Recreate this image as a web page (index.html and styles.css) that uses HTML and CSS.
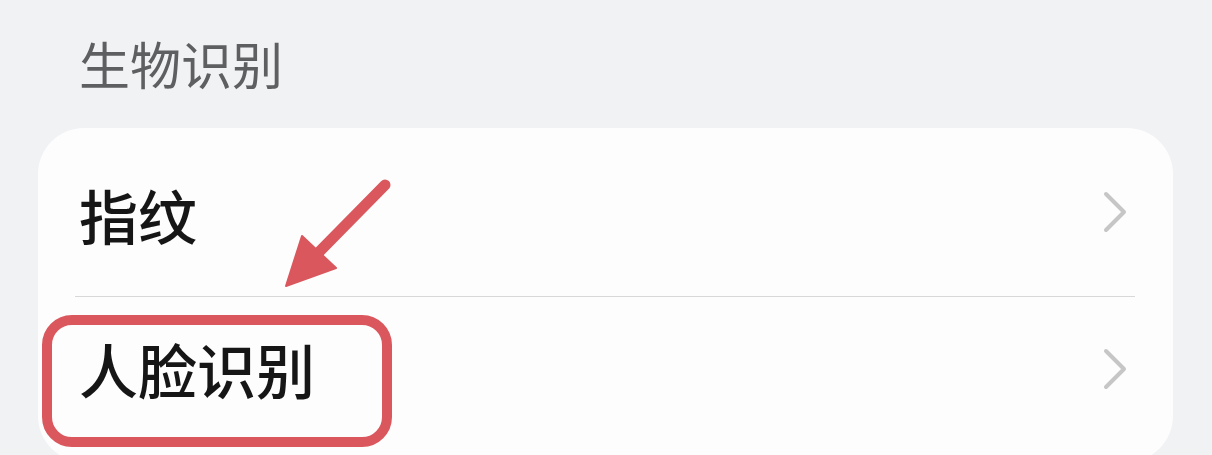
FILE: index.html
```html
<!DOCTYPE html>
<html lang="zh-CN">
<head>
<meta charset="utf-8">
<title>生物识别</title>
<link rel="stylesheet" href="styles.css">
</head>
<body>
<div class="page">
  <h2 class="section-title">生物识别</h2>
  <div class="card">
    <div class="row row-first">
      <span class="label">指纹</span>
      <svg class="chevron" viewBox="0 0 24 42" width="24" height="42"><path d="M3 3 L21 21 L3 39" fill="none" stroke="#c6c6c6" stroke-width="4" stroke-linecap="round" stroke-linejoin="round"/></svg>
    </div>
    <div class="divider"></div>
    <div class="row row-second">
      <span class="label">人脸识别</span>
      <svg class="chevron" viewBox="0 0 24 42" width="24" height="42"><path d="M3 3 L21 21 L3 39" fill="none" stroke="#c6c6c6" stroke-width="4" stroke-linecap="round" stroke-linejoin="round"/></svg>
    </div>
  </div>
  <div class="highlight-box"></div>
  <svg class="arrow" width="1212" height="455" viewBox="0 0 1212 455">
    <line x1="385" y1="185" x2="318" y2="253" stroke="#d9575d" stroke-width="11" stroke-linecap="round"/>
    <polygon points="286,286 302,236 336,268" fill="#d9575d" stroke="#d9575d" stroke-width="2" stroke-linejoin="round"/>
  </svg>
</div>
</body>
</html>
```

FILE: styles.css
```css
html, body {
  margin: 0;
  padding: 0;
  background: #f1f2f4;
}
body {
  font-family: "Noto Sans CJK SC", "Noto Sans", sans-serif;
  width: 1212px;
  height: 455px;
  overflow: hidden;
}
.page {
  position: relative;
  width: 1212px;
  height: 455px;
  overflow: hidden;
}
.section-title {
  margin: 0;
  padding: 35px 0 0 79px;
  height: 128px;
  box-sizing: border-box;
  font-size: 51px;
  line-height: 56px;
  font-weight: 400;
  color: #5e5f61;
  letter-spacing: 0;
}
.card {
  margin: 0 0 0 38px;
  width: 1135px;
  height: 334px;
  background: #fdfdfd;
  border-radius: 46px;
}
.row {
  display: flex;
  align-items: center;
  justify-content: space-between;
  padding: 0 46px 0 41px;
}
.row-first {
  height: 168px;
  padding-top: 6px;
  box-sizing: border-box;
}
.row-second {
  height: 144px;
}
.label {
  font-size: 59px;
  line-height: 60px;
  font-weight: 500;
  color: #161616;
}
.chevron {
  display: block;
}
.row-first .chevron {
  margin-top: -6px;
}
.divider {
  height: 1px;
  margin: 0 38px 0 37px;
  background: #d8d8d8;
}
.highlight-box {
  position: absolute;
  left: 42px;
  top: 315px;
  width: 350px;
  height: 132px;
  box-sizing: border-box;
  border: 10px solid #d9575d;
  border-radius: 30px;
}
.arrow {
  position: absolute;
  left: 0;
  top: 0;
  pointer-events: none;
}
```
